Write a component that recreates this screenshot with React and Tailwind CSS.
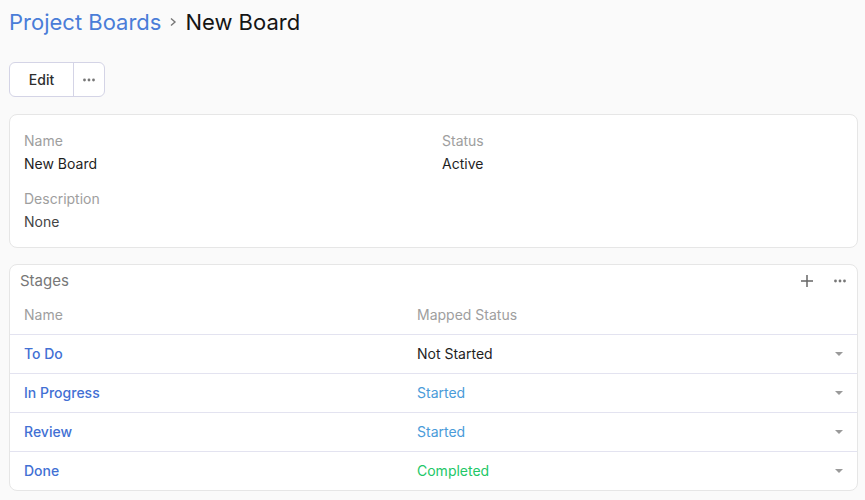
import React from 'react';

const stages = [
  { name: 'To Do', status: 'Not Started', color: 'text-[#1f1f1f]' },
  { name: 'In Progress', status: 'Started', color: 'text-[#4a9bd9]' },
  { name: 'Review', status: 'Started', color: 'text-[#4a9bd9]' },
  { name: 'Done', status: 'Completed', color: 'text-[#22c767]' },
];

function Dots({ className }) {
  return (
    <svg width="14" height="4" viewBox="0 0 14 4" className={className} fill="currentColor">
      <circle cx="2.5" cy="2" r="1.4" />
      <circle cx="7" cy="2" r="1.4" />
      <circle cx="11.5" cy="2" r="1.4" />
    </svg>
  );
}

function Caret() {
  return (
    <svg width="10" height="6" viewBox="0 0 10 6" className="text-[#9a9a9a]" fill="currentColor">
      <path d="M1 1h8L5 5z" />
    </svg>
  );
}

export default function App() {
  return (
    <div className="min-h-[500px] bg-[#fafafa] pl-[9px] pr-[7px] pt-[8px] text-[14px] text-[#1f1f1f]" style={{ fontFamily: 'Inter, "Noto Sans", sans-serif' }}>
      <div className="flex items-center h-[28px] text-[22px] leading-[28px]">
        <span className="text-[#4a7dd8]">Project Boards</span>
        <svg width="10" height="12" viewBox="0 0 10 12" className="ml-[7px] mr-[7px] text-[#777]" fill="none" stroke="currentColor" strokeWidth="1.4">
          <path d="M3 2.5l4 3.5-4 3.5" />
        </svg>
        <span className="text-[#151515]">New Board</span>
      </div>

      <div className="mt-[26px] flex">
        <div className="flex h-[35px] border border-[#d4d4e6] rounded-[6px] bg-white">
          <button className="w-[64px] font-medium text-[#2e2e2e] border-r border-[#d4d4e6]">Edit</button>
          <button className="w-[30px] flex items-center justify-center text-[#777]">
            <Dots />
          </button>
        </div>
      </div>

      <div className="mt-[17px] bg-white border border-[#e6e6e6] rounded-[8px] h-[134px] pl-[14px] pt-[16px]">
        <div className="grid grid-cols-[418px_1fr]">
          <div>
            <div className="text-[#9e9e9e] leading-[20px]">Name</div>
            <div className="mt-[3px] leading-[20px]">New Board</div>
          </div>
          <div>
            <div className="text-[#9e9e9e] leading-[20px]">Status</div>
            <div className="mt-[3px] leading-[20px]">Active</div>
          </div>
        </div>
        <div className="mt-[15px]">
          <div className="text-[#9e9e9e] leading-[20px]">Description</div>
          <div className="mt-[3px] leading-[20px] text-[#444]">None</div>
        </div>
      </div>

      <div className="mt-[16px] bg-white border border-[#e6e6e6] rounded-[8px] overflow-hidden">
        <div className="flex items-center h-[32px] pl-[10px] pr-[10px]">
          <span className="text-[#777] text-[15px]">Stages</span>
          <div className="ml-auto flex items-center gap-[19px]">
            <svg width="14" height="14" viewBox="0 0 14 14" className="text-[#666]" fill="none" stroke="currentColor" strokeWidth="1.5">
              <path d="M7 1v12M1 7h12" />
            </svg>
            <Dots className="text-[#777]" />
          </div>
        </div>
        <div className="grid grid-cols-[393px_1fr] h-[38px] items-center border-b border-[#e3e3f0] text-[#9e9e9e]">
          <span className="pl-[14px] -mt-[2px]">Name</span>
          <span className="pl-[14px] -mt-[2px]">Mapped Status</span>
        </div>
        {stages.map((s, i) => (
          <div
            key={s.name}
            className={`grid grid-cols-[393px_1fr_40px] items-center ${i < stages.length - 1 ? 'h-[39px] border-b border-[#e3e3f0]' : 'h-[38px]'}`}
          >
            <span className="pl-[14px] -mt-[1px] font-medium text-[#4270d4]">{s.name}</span>
            <span className={`pl-[14px] -mt-[1px] ${s.color}`}>{s.status}</span>
            <span className="flex justify-end pr-[13px]">
              <Caret />
            </span>
          </div>
        ))}
      </div>
    </div>
  );
}
